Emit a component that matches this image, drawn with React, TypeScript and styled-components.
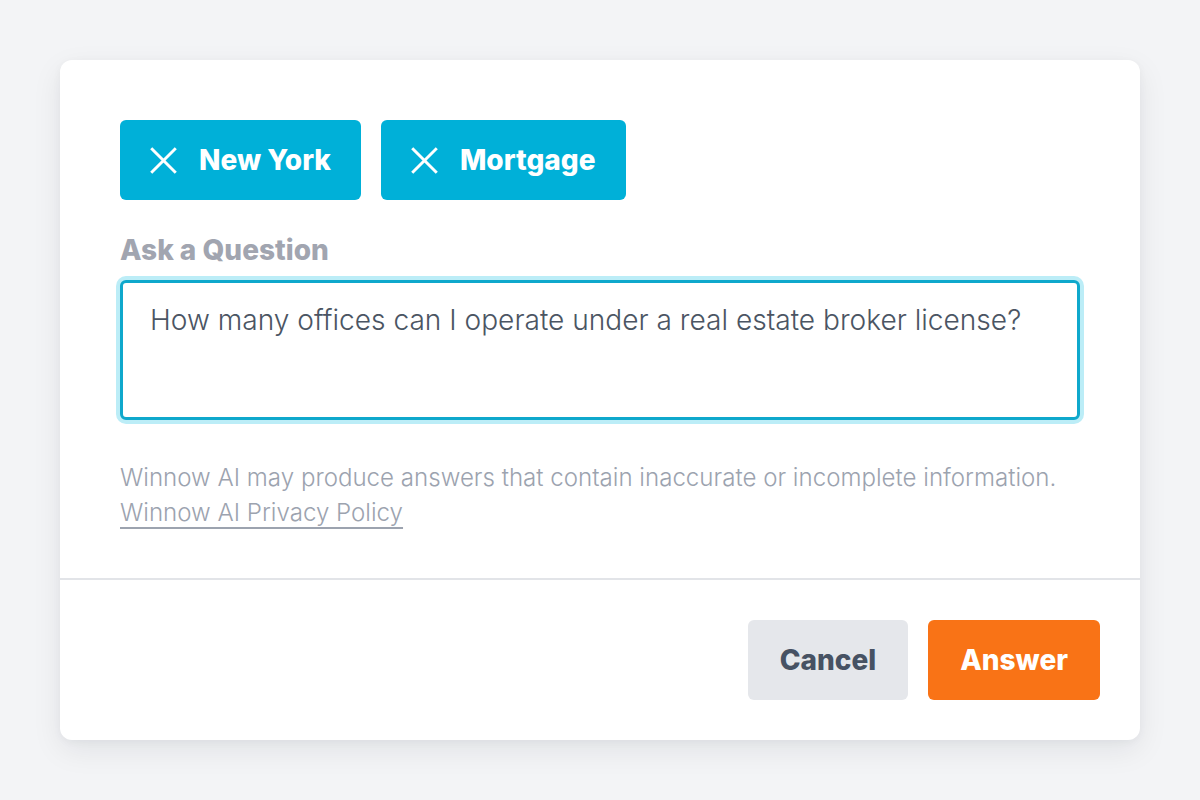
import React from 'react'
import styled, { createGlobalStyle } from 'styled-components'

const GlobalStyle = createGlobalStyle`
  html, body {
    margin: 0;
    padding: 0;
    background: #f3f4f6;
    font-family: Inter, "Noto Sans", sans-serif;
  }
  * {
    box-sizing: border-box;
  }
`

const Page = styled.div`
  width: 1200px;
  height: 800px;
  padding: 60px;
`

const Card = styled.section`
  background: #ffffff;
  border-radius: 12px;
  box-shadow: 0 10px 30px rgba(17, 24, 39, 0.08), 0 2px 8px rgba(17, 24, 39, 0.04);
  display: flex;
  flex-direction: column;
`

const Body = styled.div`
  padding: 60px 60px 48px;
  display: flex;
  flex-direction: column;
`

const ChipRow = styled.div`
  display: flex;
  gap: 20px;
`

const Chip = styled.button`
  height: 80px;
  display: flex;
  align-items: center;
  gap: 22px;
  padding: 0 30px;
  border: none;
  border-radius: 6px;
  background: #00b0d8;
  color: #ffffff;
  font-family: Inter, sans-serif;
  font-weight: 800;
  font-size: 28px;
  cursor: pointer;
  svg {
    width: 27px;
    height: 27px;
    flex-shrink: 0;
  }
`

const Label = styled.label`
  margin-top: 32px;
  font-size: 28px;
  line-height: 36px;
  font-weight: 800;
  color: #a1a5b0;
`

const QuestionInput = styled.textarea`
  margin-top: 12px;
  height: 140px;
  width: 100%;
  resize: none;
  padding: 19px 27px;
  border: 3px solid #0fa8cc;
  border-radius: 6px;
  box-shadow: 0 0 0 4px #bcedf7;
  outline: none;
  font-family: Inter, sans-serif;
  font-size: 28.1px;
  line-height: 36px;
  font-weight: 300;
  color: #4b5563;
`

const Disclaimer = styled.p`
  margin: 40px 0 0;
  font-size: 24.1px;
  line-height: 35px;
  font-weight: 300;
  color: #9ca3af;
  a {
    color: #9ca3af;
    text-decoration: underline;
    text-underline-offset: 6px;
    text-decoration-thickness: 1.5px;
  }
`

const Divider = styled.hr`
  margin: 0;
  border: none;
  border-top: 2px solid #e2e4e8;
`

const Footer = styled.div`
  display: flex;
  justify-content: flex-end;
  gap: 20px;
  padding: 40px;
`

const ActionButton = styled.button<{ $primary?: boolean }>`
  height: 80px;
  padding: 0 32px;
  border: none;
  border-radius: 6px;
  font-family: Inter, sans-serif;
  font-weight: 800;
  font-size: 28px;
  background: ${(p) => (p.$primary ? '#f97316' : '#e5e7eb')};
  color: ${(p) => (p.$primary ? '#ffffff' : '#475263')};
  cursor: pointer;
`

function CloseIcon() {
  return (
    <svg viewBox="0 0 24 24" fill="none" stroke="currentColor" strokeWidth="2.6" strokeLinecap="square">
      <path d="M2 2L22 22M22 2L2 22" />
    </svg>
  )
}

const tags = ['New York', 'Mortgage']

export default function App() {
  return (
    <>
      <GlobalStyle />
      <Page>
        <Card>
          <Body>
            <ChipRow>
              {tags.map((tag) => (
                <Chip key={tag}>
                  <CloseIcon />
                  {tag}
                </Chip>
              ))}
            </ChipRow>
            <Label htmlFor="question">Ask a Question</Label>
            <QuestionInput
              id="question"
              defaultValue="How many offices can I operate under a real estate broker license?"
            />
            <Disclaimer>
              Winnow AI may produce answers that contain inaccurate or incomplete information.
              <br />
              <a href="#">Winnow AI Privacy Policy</a>
            </Disclaimer>
          </Body>
          <Divider />
          <Footer>
            <ActionButton>Cancel</ActionButton>
            <ActionButton $primary>Answer</ActionButton>
          </Footer>
        </Card>
      </Page>
    </>
  )
}
